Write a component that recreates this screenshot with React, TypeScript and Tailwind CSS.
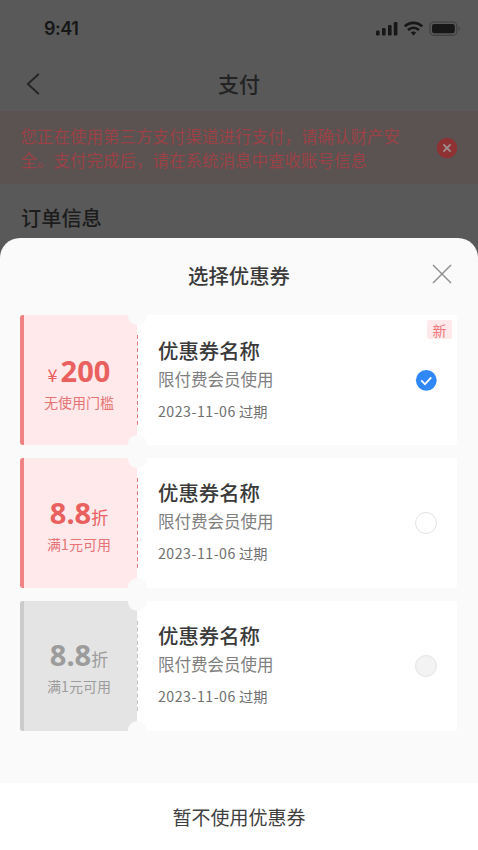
import clsx from 'clsx';

type CouponStatus = 'selected' | 'available' | 'disabled';

interface Coupon {
  id: string;
  prefix?: string;
  value: string;
  suffix?: string;
  condition: string;
  name: string;
  scope: string;
  expires: string;
  isNew?: boolean;
  status: CouponStatus;
}

const COUPONS: Coupon[] = [
  { id: 'c1', prefix: '¥', value: '200', condition: '无使用门槛', name: '优惠券名称', scope: '限付费会员使用', expires: '2023-11-06', isNew: true, status: 'selected' },
  { id: 'c2', value: '8.8', suffix: '折', condition: '满1元可用', name: '优惠券名称', scope: '限付费会员使用', expires: '2023-11-06', status: 'available' },
  { id: 'c3', value: '8.8', suffix: '折', condition: '满1元可用', name: '优惠券名称', scope: '限付费会员使用', expires: '2023-11-06', status: 'disabled' },
];

function StatusBar() {
  return (
    <div className="flex h-[58px] items-center justify-between pl-[44px] pr-[17px] text-[#171717]">
      <span className="font-['Inter'] text-[18px] font-semibold leading-none tracking-[-0.5px]">9:41</span>
      <svg width="86" height="16" viewBox="0 0 86 16" fill="none">
        {/* Signal */}
        <rect x="1" y="9.5" width="3.6" height="5" rx="1.2" fill="currentColor" />
        <rect x="7" y="7" width="3.6" height="7.5" rx="1.2" fill="currentColor" />
        <rect x="13" y="4" width="3.6" height="10.5" rx="1.2" fill="currentColor" />
        <rect x="18.8" y="1" width="3.6" height="13.5" rx="1.2" fill="currentColor" />
        {/* Wifi */}
        <path d="M29.8 5.4c5-4.8 12.4-4.8 17.4 0" stroke="currentColor" strokeWidth="2.7" />
        <path d="M33 9c3.2-3 7.8-3 11 0" stroke="currentColor" strokeWidth="2.5" />
        <path d="M35.8 11.6c1.6-1.5 3.8-1.5 5.4 0L38.5 14.4z" fill="currentColor" />
        {/* Battery */}
        <rect x="54.9" y="1" width="27" height="13.4" rx="4" stroke="#3f3f3f" strokeWidth="1.1" />
        <rect x="57" y="3.1" width="22.8" height="9.2" rx="2.2" fill="currentColor" />
        <path d="M83.6 5.6v4.2c1.6-.6 1.6-3.6 0-4.2z" fill="#3f3f3f" />
      </svg>
    </div>
  );
}

function Radio({ status }: { status: CouponStatus }) {
  if (status === 'selected') {
    return (
      <svg width="22" height="22" viewBox="0 0 22 22" fill="none">
        <circle cx="11.3" cy="11.3" r="10.4" fill="#2f88f6" />
        <path d="M6.2 11.4l3.8 3.8 6.3-6.8" stroke="#fff" strokeWidth="1.7" />
      </svg>
    );
  }
  return (
    <span
      className={clsx(
        'block size-[22px] rounded-full border-[1.5px] border-[#e4e4e4]',
        status === 'disabled' ? 'bg-[#f3f3f3]' : 'bg-white',
      )}
    />
  );
}

function CouponCard({ coupon }: { coupon: Coupon }) {
  const disabled = coupon.status === 'disabled';

  return (
    <div className="relative flex h-[130px] overflow-hidden rounded-[3px] bg-white">
      {/* Ticket stub */}
      <div
        className={clsx(
          'flex w-[117px] shrink-0 flex-col items-center border-l-4 pr-[3px]',
          disabled
            ? 'border-[#cbcbcb] bg-[#e4e4e4] pt-[34px] text-[#9c9c9c]'
            : 'border-[#f08286] bg-[#ffe9ea] pt-[35.5px] text-[#e9605f]',
        )}
      >
        <div className="flex h-[40px] items-baseline">
          {coupon.prefix && <span className="mr-[3px] text-[18px] leading-[40px]">{coupon.prefix}</span>}
          <span className="font-['Noto_Sans'] text-[29px] font-bold leading-[40px]">{coupon.value}</span>
          {coupon.suffix && <span className="text-[17px] leading-[40px]">{coupon.suffix}</span>}
        </div>
        <span className={clsx('mt-[1px] text-[14px] leading-5', !disabled && 'text-[#e87374]')}>{coupon.condition}</span>
      </div>

      {/* Perforation and notches */}
      <svg className="absolute left-[107px] top-0" width="20" height="130" viewBox="0 0 20 130">
        <line x1="10.5" y1="20" x2="10.5" y2="110" stroke={disabled ? '#c4c4c4' : '#d9777b'} strokeWidth="1" strokeDasharray="4 2.6" />
        <circle cx="10.5" cy="0.5" r="9.6" fill="#fafafa" />
        <circle cx="10.5" cy="129.5" r="9.6" fill="#fafafa" />
      </svg>

      <div className="flex flex-1 items-center justify-between pl-[21px] pr-[20px]">
        <div className="-mt-[4px] flex flex-col">
          <h3 className="text-[20.4px] font-medium leading-[30px] text-[#3a3a3a]">{coupon.name}</h3>
          <p className="text-[16.5px] leading-[28px] text-[#808080]">{coupon.scope}</p>
          <p className="mt-[7px] text-[14.2px] leading-[22px] text-[#707070]">
            <span className="tracking-[0.5px]">{coupon.expires}</span> 过期
          </p>
        </div>
        <Radio status={coupon.status} />
      </div>

      {coupon.isNew && (
        <span className="absolute right-[5px] top-[5px] flex h-[19px] w-[25px] items-center justify-center rounded-[2px] bg-[#ffe9ea] text-[14px] leading-none text-[#f0787a]">
          新
        </span>
      )}
    </div>
  );
}

export default function App() {
  return (
    <div className="flex h-[850px] w-[478px] flex-col overflow-hidden bg-[#595959] font-['Noto_Sans_CJK_SC','Noto_Sans',sans-serif]">
      <StatusBar />

      <header className="grid h-[53px] grid-cols-[60px_1fr_60px] items-center text-[#232323]">
        <svg className="-mt-[2px] ml-[26px]" width="14" height="22" viewBox="0 0 14 22" fill="none">
          <path d="M12.8 1L1.8 11l11 10" stroke="currentColor" strokeWidth="1.8" />
        </svg>
        <h1 className="-mt-[2px] text-center text-[21px] font-medium">支付</h1>
      </header>

      {/* Payment channel notice */}
      <div className="flex h-[73px] shrink-0 items-center justify-between bg-[#5a5352] pl-[20.5px] pr-[20px]">
        <p className="w-[385px] text-[16.5px] leading-[24px] text-[#9a4245]">
          您正在使用第三方支付渠道进行支付，请确认财产安全。支付完成后，请在系统消息中查收账号信息
        </p>
        <svg width="22" height="22" viewBox="0 0 22 22" fill="none">
          <circle cx="11" cy="11" r="10.3" fill="#8f3233" />
          <path d="M7.4 7.4l7.2 7.2M14.6 7.4l-7.2 7.2" stroke="#a08f8f" strokeWidth="1.8" />
        </svg>
      </div>

      <h2 className="h-[54px] shrink-0 pl-[21px] pt-[19px] text-[20.2px] font-medium leading-[30px] text-[#1c1c1c]">订单信息</h2>

      {/* Coupon sheet */}
      <section className="flex flex-1 flex-col rounded-t-[20px] bg-[#fafafa]">
        <div className="grid h-[77px] grid-cols-[60px_1fr_60px] items-center">
          <h2 className="col-start-2 -mt-[2px] text-center text-[20.4px] font-medium text-[#3a3a3a]">选择优惠券</h2>
          <svg className="-mt-[5px] ml-[14px]" width="20" height="20" viewBox="0 0 20 20" fill="none">
            <path d="M1 1l18 18M19 1L1 19" stroke="#8c8c8c" strokeWidth="1.4" />
          </svg>
        </div>

        <div className="flex flex-1 flex-col gap-[12.9px] pl-[20px] pr-[21px]">
          {COUPONS.map((coupon) => (
            <CouponCard key={coupon.id} coupon={coupon} />
          ))}
        </div>

        <button className="h-[67px] bg-white pt-[1px] text-[19px] text-[#3f3f3f]">暂不使用优惠券</button>
      </section>
    </div>
  );
}
